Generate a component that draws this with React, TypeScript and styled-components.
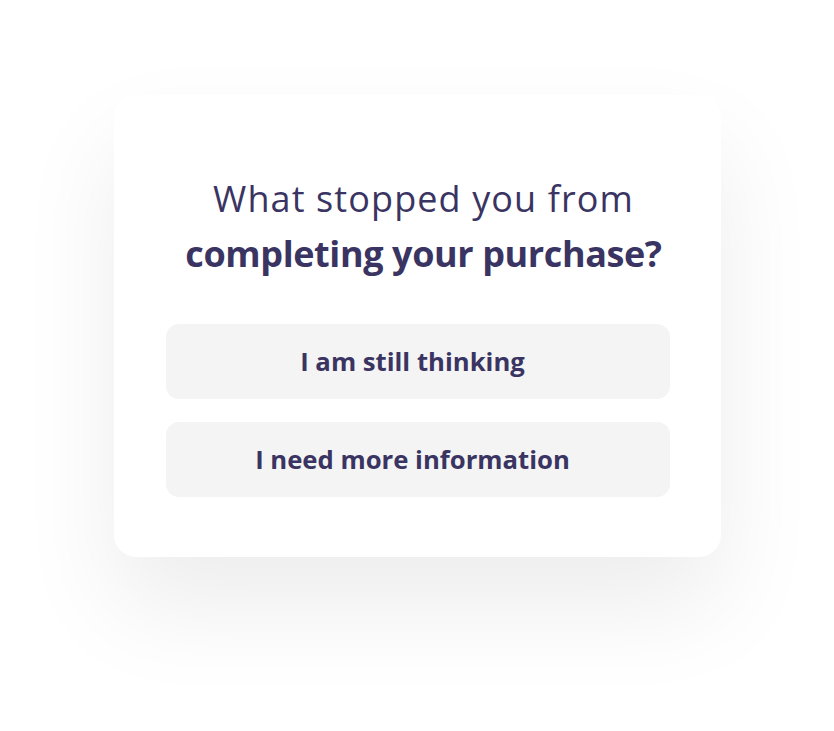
import React from 'react';
import styled, { createGlobalStyle } from 'styled-components';

const GlobalStyle = createGlobalStyle`
  html, body {
    margin: 0;
    padding: 0;
    background: #ffffff;
  }
  body {
    font-family: "Open Sans", "Noto Sans", sans-serif;
  }
`;

const Page = styled.div`
  width: 834px;
  height: 731px;
  display: flex;
  justify-content: center;
  align-items: flex-start;
  padding-top: 95px;
  box-sizing: border-box;
  overflow: hidden;
`;

const Card = styled.div`
  width: 607px;
  height: 462px;
  box-sizing: border-box;
  padding: 76px 51px 0 52px;
  background: #ffffff;
  border-radius: 22px;
  box-shadow: 0 50px 100px rgba(0, 0, 0, 0.075);
  display: flex;
  flex-direction: column;
  align-items: center;
`;

const Title = styled.h1`
  margin: 0 0 43px;
  padding-left: 12px;
  text-align: center;
  color: #3a3462;
  font-size: 36px;
  line-height: 55px;
  font-weight: 400;
  letter-spacing: 1.1px;
`;

const Strong = styled.span`
  font-weight: 700;
  letter-spacing: -0.4px;
`;

const Options = styled.div`
  width: 100%;
  display: flex;
  flex-direction: column;
  gap: 23px;
`;

const Option = styled.button`
  height: 75px;
  width: 100%;
  padding: 0 10px 0 0;
  border: none;
  border-radius: 13px;
  background: #f4f4f4;
  color: #3a3462;
  font-family: inherit;
  font-size: 25.7px;
  font-weight: 700;
  cursor: pointer;
`;

const options = ['I am still thinking', 'I need more information'];

const App = () => (
  <>
    <GlobalStyle />
    <Page>
      <Card>
        <Title>
          What stopped you from
          <br />
          <Strong>completing your purchase?</Strong>
        </Title>
        <Options>
          {options.map((label) => (
            <Option key={label} type="button">{label}</Option>
          ))}
        </Options>
      </Card>
    </Page>
  </>
);

export default App;
